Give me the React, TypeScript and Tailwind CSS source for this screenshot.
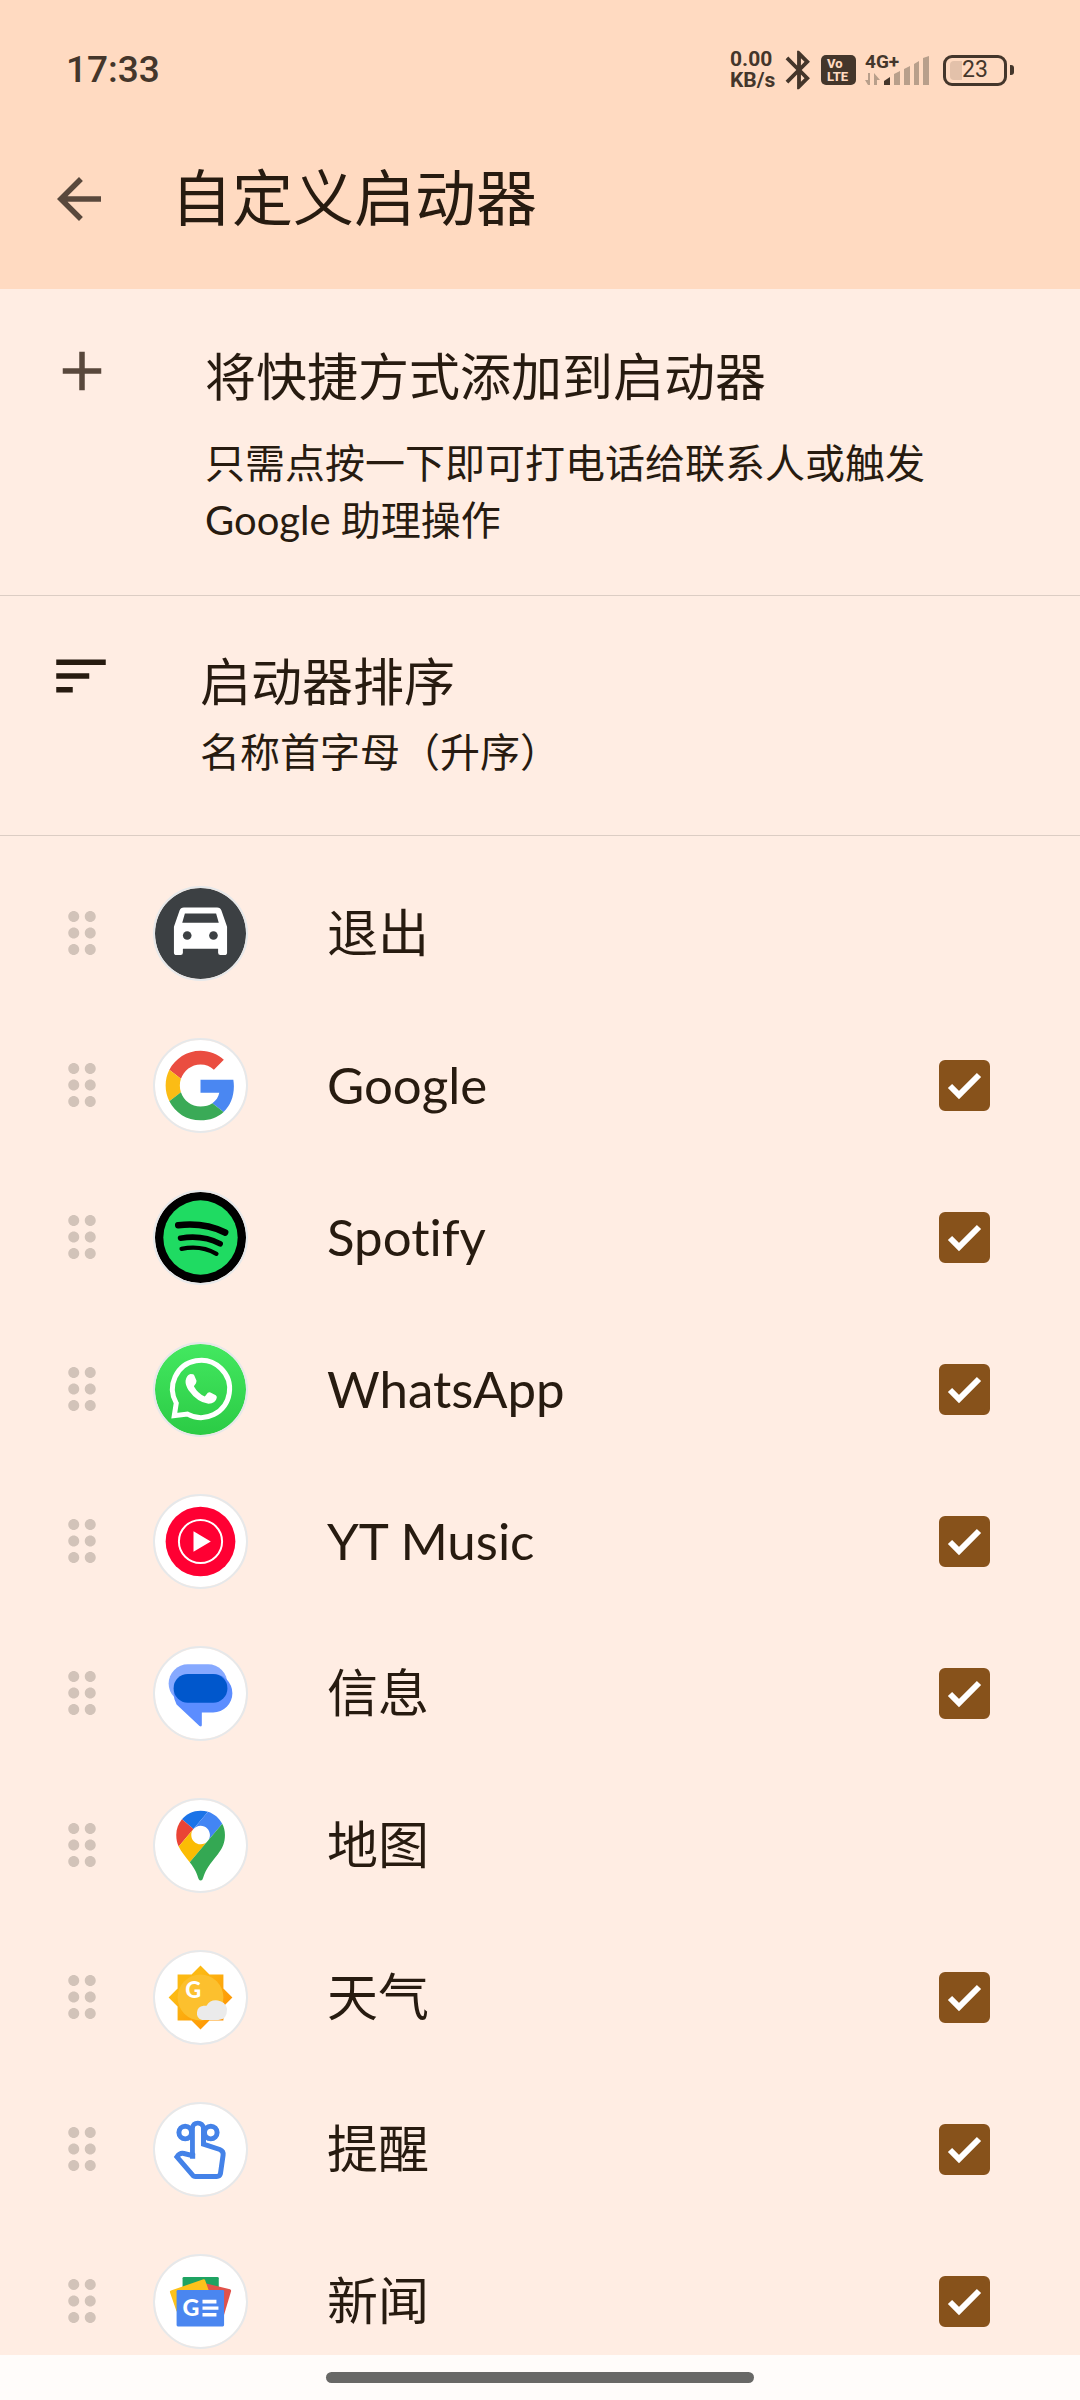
import React, { useState } from 'react';
import { MdArrowBack, MdAdd, MdSort, MdDragIndicator, MdBluetooth } from 'react-icons/md';

interface LauncherApp {
  id: string;
  name: string;
  background: string;
  icon: React.ReactNode;
  // Apps without a checkbox can't be hidden from the launcher
  removable: boolean;
}

// All app logos are drawn around the centre of the round badge
function Badge({ background, children }: { background: string; children: React.ReactNode }) {
  return (
    <span className={`block size-[95px] shrink-0 overflow-hidden rounded-full border-2 border-[#e6e8ea] bg-clip-padding ${background}`}>
      <svg viewBox="-137 -137 274 274" className="size-full" aria-hidden="true">
        {children}
      </svg>
    </span>
  );
}

const ExitIcon = (
  <>
    <path
      fill="#fff"
      fillRule="evenodd"
      d="M-50-78H50Q60-78 63-69L80-20V58Q80 65 72 65H60Q53 65 53 58V46H-53V58Q-53 65-60 65H-72Q-80 65-80 58V-20L-63-69Q-60-78-50-78ZM-47-60L-55-32H55L47-60Z"
    />
    <circle cx="-40" cy="6" r="13" fill="#3c4043" />
    <circle cx="39" cy="6" r="13" fill="#3c4043" />
  </>
);

const GoogleIcon = (
  <g transform="translate(-105 -105) scale(4.375)">
    <path fill="#EA4D40" d="M24 9.5c3.54 0 6.71 1.22 9.21 3.6l6.85-6.85C35.9 2.38 30.47 0 24 0 14.62 0 6.51 5.38 2.56 13.22l7.98 6.19C12.43 13.72 17.74 9.5 24 9.5z" />
    <path fill="#4A87F2" d="M46.98 24.55c0-1.57-.15-3.09-.38-4.55H24v9.02h12.94c-.58 2.96-2.26 5.48-4.78 7.18l7.73 6c4.51-4.18 7.09-10.36 7.09-17.65z" />
    <path fill="#FBBC15" d="M10.53 28.59c-.48-1.45-.76-2.99-.76-4.59s.27-3.14.76-4.59l-7.98-6.19C.92 16.46 0 20.12 0 24c0 3.88.92 7.54 2.56 10.78l7.97-6.19z" />
    <path fill="#3AAA57" d="M24 48c6.48 0 11.93-2.13 15.89-5.81l-7.73-6c-2.15 1.45-4.92 2.3-8.16 2.3-6.26 0-11.57-4.22-13.47-9.91l-7.98 6.19C6.51 42.62 14.62 48 24 48z" />
  </g>
);

const SpotifyIcon = (
  <>
    <circle r="112" fill="#1fdb62" />
    <g fill="none" stroke="#000" strokeLinecap="round">
      <path strokeWidth="20" d="M-67-37Q13-46 74-15" />
      <path strokeWidth="17" d="M-60 2Q7-9 59 19" />
      <path strokeWidth="13" d="M-57 34Q1 22 48 49" />
    </g>
  </>
);

const WhatsAppIcon = (
  <>
    <path fill="none" stroke="#fff" strokeWidth="15" d="M-79 79L-73 41A86 86 0 1 1-39 74Z" />
    <path
      fill="#fff"
      d="M-43-34Q-38-46-30-47L-22-46Q-19-44-18-41L-12-26Q-12-22-14-18L-20-10Q-8 12 13 21L22 10Q26 7 30 9L46 17Q50 20 49 25Q46 42 24 43Q-10 38-36 2Q-46-13-45-26Z"
    />
  </>
);

const YtMusicIcon = (
  <>
    <circle r="105" fill="#ff0033" />
    <circle r="65" fill="none" stroke="#fff" strokeWidth="6" />
    <path fill="#fff" d="M-21-31L31 0L-21 31Z" />
  </>
);

const MessagesIcon = (
  <>
    <rect x="-96" y="-88" width="177" height="116" rx="58" fill="#86a9ff" />
    <path fill="#5c8dff" d="M-23-59H38A58 58 0 0 1 38 57H4V95Q4 102-3 98L-72 33Q-81 15-81-1A58 58 0 0 1-23-59Z" />
    <rect x="-81" y="-59" width="162" height="87" rx="43" fill="#0057cc" />
  </>
);

const MapsIcon = (
  <g transform="translate(-73 -105) scale(1.587)">
    <path fill="#1a73e8" d="M60.2 2.2C55.8.8 51 0 46.1 0 32 0 19.3 6.4 10.8 16.5l21.8 18.3L60.2 2.2z" />
    <path fill="#ea4335" d="M10.8 16.5C4.1 24.5 0 34.9 0 46.1c0 8.7 1.7 15.7 4.6 22l28-33.3-21.8-18.3z" />
    <path fill="#4285f4" d="M46.2 28.5c9.8 0 17.7 7.9 17.7 17.7 0 4.3-1.6 8.3-4.2 11.4 0 0 13.9-16.6 27.5-32.7-5.6-10.8-15.3-19-27-22.7L32.6 34.8c3.3-3.8 8.1-6.3 13.6-6.3" />
    <path fill="#fbbc04" d="M46.2 63.8c-9.8 0-17.7-7.9-17.7-17.7 0-4.3 1.5-8.3 4.1-11.3l-28 33.3c4.8 10.6 12.8 19.2 21 29.9l34.1-40.5c-3.3 3.9-8.1 6.3-13.5 6.3" />
    <path fill="#34a853" d="M59.1 109.2c15.4-24.1 33.3-35 33.3-63 0-7.7-1.9-14.9-5.2-21.3L25.6 98c2.6 3.4 5.3 7.3 7.9 11.3 9.4 14.5 6.8 23.1 12.8 23.1s3.4-8.7 12.8-23.2" />
  </g>
);

const WeatherIcon = (
  <>
    <defs>
      <linearGradient id="sun" x1="0" y1="0" x2="1" y2="1">
        <stop offset="0.3" stopColor="#fcb913" />
        <stop offset="1" stopColor="#ff8a00" />
      </linearGradient>
    </defs>
    <path fill="url(#sun)" d="M-69-69H-27L0-96L27-69H69V-27L96 0L69 27V69H27L0 96L-27 69H-69V27L-96 0L-69-27Z" />
    <circle r="69" fill="#fcc02e" />
    <text x="-22" y="1" textAnchor="middle" fontSize="66" fontWeight="900" fontFamily="Lato, sans-serif" fill="#fff">
      G
    </text>
    <path fill="#ebebeb" d="M5 68A22 22 0 0 1 9 25Q14 24 18 25A34 34 0 0 1 80 34Q80 68 54 68Z" />
  </>
);

const ReminderIcon = (
  <g fill="none" stroke="#4482e8" strokeWidth="15" strokeLinejoin="round">
    <circle cx="-46" cy="-51" r="19" />
    <circle cx="31" cy="-51" r="19" />
    <path
      fill="#fff"
      strokeLinejoin="miter"
      d="M-24-64Q-22-79-8-79Q6-79 9-64V-16L58 0Q70 5 68 17L60 73Q58 81 49 81H-16Q-20 81-23 78L-71 22Q-62 9-50 12L-17 20H-16H-24Z"
    />
    <path stroke="none" fill="#fff" d="M-17-64Q-17-72-8-72Q1-72 1-64V-8H-9V10H-17Z" />
  </g>
);

const NewsIcon = (
  <>
    <rect x="-54" y="-74" width="109" height="60" rx="4" fill="#1ea362" />
    <path fill="#e0524a" d="M17-54L89-37Q93-35 92-31L71 40H10Z" />
    <path fill="#fcc21b" d="M-89-33L9-67Q13-68 14-64L26-30L-72 30L-92-28Q-93-32-89-33Z" />
    <rect x="-72" y="-35" width="143" height="110" rx="4" fill="#4a86f0" />
    <text x="-29" y="44" textAnchor="middle" fontSize="70" fontWeight="900" fontFamily="Lato, sans-serif" fill="#fff">
      G
    </text>
    <path fill="#fff" d="M6-5H48V6H6ZM6 15H54V25H6ZM6 35H48V45H6Z" />
  </>
);

const apps: LauncherApp[] = [
  { id: 'exit', name: '退出', background: 'bg-[#3c4043]', icon: ExitIcon, removable: false },
  { id: 'google', name: 'Google', background: 'bg-white', icon: GoogleIcon, removable: true },
  { id: 'spotify', name: 'Spotify', background: 'bg-black', icon: SpotifyIcon, removable: true },
  { id: 'whatsapp', name: 'WhatsApp', background: 'bg-linear-to-b from-[#43e860] to-[#2bcb45]', icon: WhatsAppIcon, removable: true },
  { id: 'ytmusic', name: 'YT Music', background: 'bg-white', icon: YtMusicIcon, removable: true },
  { id: 'messages', name: '信息', background: 'bg-white', icon: MessagesIcon, removable: true },
  { id: 'maps', name: '地图', background: 'bg-white', icon: MapsIcon, removable: false },
  { id: 'weather', name: '天气', background: 'bg-white', icon: WeatherIcon, removable: true },
  { id: 'reminder', name: '提醒', background: 'bg-white', icon: ReminderIcon, removable: true },
  { id: 'news', name: '新闻', background: 'bg-white', icon: NewsIcon, removable: true },
];

function StatusBar() {
  return (
    <div className="flex h-[140px] items-center justify-between pr-[66px] pl-[66px] font-[Roboto,sans-serif] text-[#44362b]">
      <span className="text-[37px] leading-[40px] font-medium">17:33</span>

      <div className="flex items-center">
        <div className="w-[47px] text-[21px] leading-[21px] font-bold">
          <div>0.00</div>
          <div>KB/s</div>
        </div>
        <MdBluetooth size={46} className="mx-[-1px]" aria-label="蓝牙" />

        <div className="flex h-[30px] w-[35px] flex-col rounded-[5px] bg-[#44362b] px-[6px] pt-[2px] text-[13px] leading-[13px] font-extrabold text-[#ffdac1]">
          <span>Vo</span>
          <span>LTE</span>
        </div>

        {/* Mobile signal, only the first bar is lit */}
        <div className="relative ml-[9px] h-[32px] w-[64px]">
          <svg viewBox="0 0 64 32" className="size-full" aria-hidden="true">
            <g fill="#b89f8b">
              <path d="M29 20L35 17V31H29ZM39 15L45 12V31H39ZM49 10L54 7V31H49ZM58 4L64 2V31H58Z" />
              <path d="M5 19V31H3L0 26H3V19ZM9 31V19L15 26H12V31Z" />
            </g>
            <path fill="#44362b" d="M19 31V27L25 23V31Z" />
          </svg>
          <span className="absolute top-[-1px] left-0 text-[19px] leading-[18px] font-bold">4G+</span>
        </div>

        <div className="ml-[14px] flex items-center gap-[3px]">
          <div className="relative flex h-[31px] w-[64px] items-center justify-center rounded-[9px] border-[3px] border-[#44362b]">
            <span className="absolute inset-y-[3px] left-[4px] w-[12px] rounded-l-[4px] bg-[#e3c1aa]" />
            <span className="relative text-[23px] leading-[24px]">23</span>
          </div>
          <span className="h-[10px] w-[4px] rounded-r-[3px] bg-[#44362b]" />
        </div>
      </div>
    </div>
  );
}

function AppRow({ app }: { app: LauncherApp }) {
  const [checked, setChecked] = useState(true);

  return (
    <li className="flex h-[152px] items-center pr-[90px] pl-[49px]">
      <button type="button" aria-label={`移动${app.name}`} className="mr-[38px] cursor-grab text-[#d2c3b9]">
        <MdDragIndicator size={66} />
      </button>
      <label htmlFor={app.id} className="flex grow items-center">
        <Badge background={app.background}>{app.icon}</Badge>
        <span className="grow pl-[79px] text-[51px] leading-[60px]">{app.name}</span>
      </label>
      {app.removable && (
        <span className="grid size-[51px] shrink-0">
          <input
            id={app.id}
            type="checkbox"
            checked={checked}
            onChange={(e) => setChecked(e.target.checked)}
            className="peer col-start-1 row-start-1 size-[51px] appearance-none rounded-[6px] border-[5px] border-[#87521b] checked:bg-[#87521b]"
          />
          <svg
            viewBox="0 0 51 51"
            className="pointer-events-none col-start-1 row-start-1 hidden size-full peer-checked:block"
            aria-hidden="true"
          >
            <path d="M11 26L20 35L40 15" fill="none" stroke="#fff" strokeWidth="6" />
          </svg>
        </span>
      )}
    </li>
  );
}

export default function App() {
  return (
    <div
      className="flex h-screen flex-col bg-[#ffede3] font-[Lato,'Noto_Sans_CJK_SC',sans-serif] text-[#271b10] [font-variant-ligatures:none]"
      lang="zh-CN"
    >
      <header className="shrink-0 bg-[#ffdac1]">
        <StatusBar />
        <div className="flex h-[149px] items-start pl-[46px]">
          <button type="button" aria-label="返回" className="mt-[26px] text-[#59483c]">
            <MdArrowBack size={66} />
          </button>
          <h1 className="mt-[18px] ml-[59px] text-[61px] leading-[80px]">自定义启动器</h1>
        </div>
      </header>

      <main className="min-h-0 grow overflow-y-auto [scrollbar-width:none]">
        <button type="button" className="flex w-full items-start border-b border-[#dccdc4] pt-[58px] pr-[120px] pb-[46px] pl-[49px] text-left">
          <MdAdd size={66} className="mt-[-9px] shrink-0 text-[#59483c]" />
          <span className="pl-[90px]">
            <span className="block text-[51px] leading-[60px]">将快捷方式添加到启动器</span>
            <span className="mt-[28px] block text-[40px] leading-[57px]">
              只需点按一下即可打电话给联系人或触发 Google 助理操作
            </span>
          </span>
        </button>

        <button type="button" className="flex w-full items-start border-b border-[#dccdc4] pt-[56px] pr-[120px] pb-[54px] pl-[48px] text-left">
          <MdSort size={66} className="mt-[-9px] shrink-0" />
          <span className="pl-[86px]">
            <span className="block text-[51px] leading-[60px]">启动器排序</span>
            <span className="mt-[12px] block text-[40px] leading-[57px]">名称首字母（升序）</span>
          </span>
        </button>

        <ul className="pt-[21px]">
          {apps.map((app) => (
            <AppRow key={app.id} app={app} />
          ))}
        </ul>
      </main>

      {/* Gesture navigation bar */}
      <div className="flex h-[45px] shrink-0 items-center justify-center bg-[#fffcfa]">
        <div className="h-[11px] w-[428px] rounded-full bg-[#686866]" />
      </div>
    </div>
  );
}
